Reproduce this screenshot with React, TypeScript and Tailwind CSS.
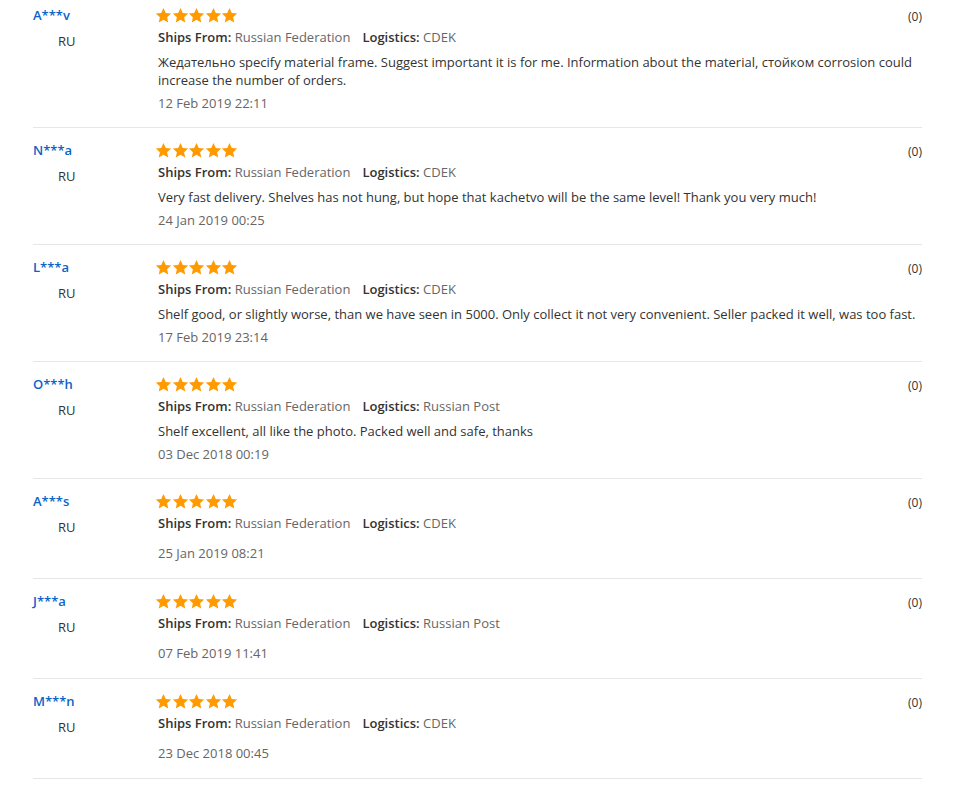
const reviews = [
  {
    name: 'A***v',
    logistics: 'CDEK',
    text: 'Жедательно specify material frame. Suggest important it is for me. Information about the material, стойком corrosion could increase the number of orders.',
    date: '12 Feb 2019 22:11',
  },
  {
    name: 'N***a',
    logistics: 'CDEK',
    text: 'Very fast delivery. Shelves has not hung, but hope that kachetvo will be the same level! Thank you very much!',
    date: '24 Jan 2019 00:25',
  },
  {
    name: 'L***a',
    logistics: 'CDEK',
    text: 'Shelf good, or slightly worse, than we have seen in 5000. Only collect it not very convenient. Seller packed it well, was too fast.',
    date: '17 Feb 2019 23:14',
  },
  {
    name: 'O***h',
    logistics: 'Russian Post',
    text: 'Shelf excellent, all like the photo. Packed well and safe, thanks',
    date: '03 Dec 2018 00:19',
  },
  { name: 'A***s', logistics: 'CDEK', text: '', date: '25 Jan 2019 08:21' },
  { name: 'J***a', logistics: 'Russian Post', text: '', date: '07 Feb 2019 11:41' },
  { name: 'M***n', logistics: 'CDEK', text: '', date: '23 Dec 2018 00:45' },
];

function Star() {
  return (
    <svg viewBox="0 0 24 24" className="w-[17px] h-[17px] -mr-[0.5px]">
      <path
        d="M12 1.5l3.2 7 7.6.8-5.7 5.1 1.6 7.5L12 18l-6.7 3.9 1.6-7.5L1.2 9.3l7.6-.8z"
        fill="#ff9a00"
      />
    </svg>
  );
}

function Row({ r, first }: { r: (typeof reviews)[number]; first: boolean }) {
  return (
    <div className={`flex border-b border-[#e6e6e6] ${first ? 'pt-[7px]' : 'pt-[14px]'} ${r.text ? 'pb-[15px]' : 'pb-[16px]'}`}>
      <div className="w-[122px] shrink-0">
        <div className="text-[13px] leading-[18px] font-semibold text-[#0a64c8] -mt-[1px]">{r.name}</div>
        <div className="pl-[25px] mt-[8px] text-[13px] leading-[18px] text-[#333]">RU</div>
      </div>
      <div className="flex-1">
        <div className="flex h-[16px] items-start justify-between">
          <div className="flex h-[16px] items-center">
            <Star />
            <Star />
            <Star />
            <Star />
            <Star />
          </div>
          <div className="text-[12px] leading-[18px] text-[#333] mt-[1px]">(0)</div>
        </div>
        <div className="mt-[5px] pl-[3px] text-[13px] leading-[18px] text-[#666]">
          <span className="font-semibold text-[#333]">Ships From:</span> Russian Federation
          <span className="ml-[12px] font-semibold text-[#333]">Logistics:</span> {r.logistics}
        </div>
        {r.text ? (
          <div className="mt-[7px] mb-[5px] pl-[3px] pr-[6px] text-[13px] leading-[18px] text-[#333]">{r.text}</div>
        ) : (
          <div className="h-[12px]" />
        )}
        <div className="pl-[3px] text-[13px] leading-[18px] text-[#666]">{r.date}</div>
      </div>
    </div>
  );
}

export default function App() {
  return (
    <div className="min-h-screen bg-white" style={{ fontFamily: '"Open Sans", "Liberation Sans", sans-serif' }}>
      <div className="ml-[33px] w-[889px]">
        {reviews.map((r, i) => (
          <Row key={i} r={r} first={i === 0} />
        ))}
      </div>
    </div>
  );
}
